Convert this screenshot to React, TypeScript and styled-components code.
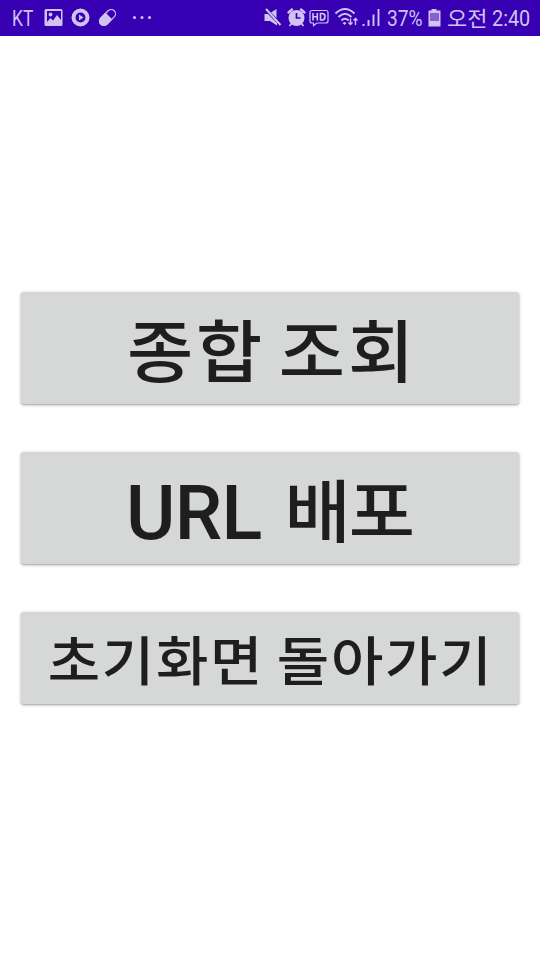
import React from 'react';
import styled, { createGlobalStyle } from 'styled-components';

const Global = createGlobalStyle`
  *, *::before, *::after { box-sizing: border-box; }
  body { margin: 0; background: #fff; }
`;

const Page = styled.div`
  width: 100%;
  height: 960px;
  display: flex;
  flex-direction: column;
  overflow: hidden;
`;

const StatusBar = styled.header`
  height: 36px;
  flex: none;
  display: flex;
  align-items: center;
  justify-content: space-between;
  padding: 0 9px 0 12px;
  background: #3700b3;
  color: #d1c2f1;
  font: 400 22px/37px Roboto, "Noto Sans CJK KR", sans-serif;
  white-space: nowrap;
`;

const Group = styled.div`
  display: flex;
  align-items: center;
  height: 36px;
`;

const Slot = styled.span<{ $w: number }>`
  width: ${p => p.$w}px;
  height: 36px;
  flex: none;
  display: block;
`;

const Condensed = styled.span<{ $scale: number }>`
  display: block;
  transform: scaleX(${p => p.$scale});
  transform-origin: left center;
`;

const Meridiem = styled.span`
  display: block;
  font-size: 22px;
  line-height: 38px;
  transform: scaleY(0.95);
`;

const Icon = styled.svg`
  display: block;
  flex: none;
`;

const Menu = styled.main`
  display: flex;
  flex-direction: column;
  gap: 48px;
  padding: 256px 21px 0;
`;

const Button = styled.button<{ $small?: boolean }>`
  height: ${p => (p.$small ? 92 : 112)}px;
  display: flex;
  align-items: center;
  justify-content: center;
  padding: 0 0 ${p => (p.$small ? 2 : 0)}px ${p => (p.$small ? 1 : 4)}px;
  border: 0;
  border-radius: 3px;
  background: #d6d8d7;
  box-shadow: 0 1px 2px rgba(0, 0, 0, 0.28), 0 1px 4px rgba(0, 0, 0, 0.16);
  color: #1e1e1e;
  font: 500 ${p => (p.$small ? 57 : 72)}px/1 "Noto Sans CJK KR", sans-serif;
  letter-spacing: ${p => (p.$small ? 1.7 : 2.9)}px;
  word-spacing: ${p => (p.$small ? -2 : -5.5)}px;
  white-space: pre;
`;

const Label = styled.span`
  display: flex;
  align-items: baseline;
  padding-top: 7px;
  margin-left: -5px;
  letter-spacing: -2px;
`;

const Hangul = styled.span<{ $gap?: number }>`
  display: block;
  margin-left: ${p => p.$gap ?? 0}px;
  transform: scaleY(0.94);
`;

const Latin = styled.span`
  font: 500 75.5px/1 Roboto, sans-serif;
  letter-spacing: -0.8px;
`;

export default function App() {
  return (
    <Page>
      <Global />
      <StatusBar>
        <Group>
          <Slot $w={32}><Condensed $scale={0.79}>KT</Condensed></Slot>
          <Icon width="120" height="36" viewBox="44 0 120 36" fill="currentColor">
            <path fillRule="evenodd" d="M46 9h15q1.500 0 1.500 1.500v14q0 1.500-1.500 1.500H46q-1.500 0-1.500-1.500v-14Q44.500 9 46 9ZM47 11v11l3.500-4 2.500 2.500 4-5.500 4 5V11Z" />
            <circle cx="50.500" cy="14.500" r="1.900" />
            <path fillRule="evenodd" d="M80.500 8.500a9 9 0 1 1 0 18 9 9 0 0 1 0-18Zm0 4a5 5 0 1 0 0 10 5 5 0 0 0 0-10Z" />
            <path d="m79 14.500 4.500 3-4.500 3Z" />
            <g transform="translate(107.500 17.500) rotate(-45)">
              <rect x="-9.500" y="-4.300" width="19" height="8.600" rx="4.300" fill="none" stroke="currentColor" strokeWidth="1.200" />
              <path d="M2-4.900h-7a4.900 4.900 0 0 0 0 9.800h7Z" />
            </g>
            <circle cx="134.500" cy="17.500" r="1.500" /><circle cx="142" cy="17.500" r="1.500" /><circle cx="149.500" cy="17.500" r="1.500" />
          </Icon>
        </Group>
        <Group>
          <Icon width="123" height="36" viewBox="264 0 123 36" fill="none" stroke="currentColor">
            <path fill="currentColor" stroke="none" d="M264.500 14h3.500l9 9v2.500l-7-4.500h-5.500ZM271 12.500l5.500-3.500v9Z" />
            <path d="m266 9 14.500 16" strokeWidth="2" />
            <circle cx="296.500" cy="18" r="8" fill="currentColor" stroke="none" />
            <path d="m288.500 12.500 3.500-3M304.500 12.500l-3.500-3" strokeWidth="2.400" strokeLinecap="round" />
            <path d="m291.500 23.500-2 2.500M301.500 23.500l2 2.500" strokeWidth="1.800" />
            <path d="M296.500 13v5h4" stroke="#3700b3" strokeWidth="1.700" />
            <path d="M312 10.500h14q2 0 2 2v8.500q0 2-2 2h-9l-3.500 2.500v-2.500H312q-2 0-2-2v-8.500q0-2 2-2Z" strokeWidth="1.200" />
            <path d="M313 13v7.500M317.300 13v7.500M313 16.700h4.300M320.500 13.500v6.500h1.500q3-.2 3-3.300t-3-3.200Z" strokeWidth="1.600" />
            <path d="M335.500 13.500q9.500-9 19 0M338.500 17q6.500-6.500 13 0M341.500 20.500q3.500-3.500 7 0" strokeWidth="2" />
            <path fill="currentColor" stroke="none" d="m342.500 23 2-1 2 1-2 2Z" />
            <path d="M350.500 18.500v6M348.500 22.500l2 2 2-2M355.500 25v-6.500M353.500 20.500l2-2 2 2" strokeWidth="1.400" />
            <path d="M363.500 24v2M368.500 20v6M373.500 14.500v11.500M378.500 9v17" strokeWidth="1.900" />
          </Icon>
          <Slot $w={41}><Condensed $scale={0.87}>37%</Condensed></Slot>
          <Icon width="19" height="36" viewBox="428 0 19 36" fill="currentColor">
            <path d="M431.500 9h5v1.500h4v16h-12v-16h3Z" />
            <path fill="#3700b3" fillOpacity=".5" d="M430 13h9v8h-9Z" />
          </Icon>
          <Slot $w={45}><Meridiem>오전</Meridiem></Slot>
          <Slot $w={39}><Condensed $scale={0.9}>2:40</Condensed></Slot>
        </Group>
      </StatusBar>
      <Menu>
        <Button><Hangul>종합 조회</Hangul></Button>
        <Button><Label><Latin>URL</Latin><Hangul $gap={23}>배포</Hangul></Label></Button>
        <Button $small><Hangul>초기화면 돌아가기</Hangul></Button>
      </Menu>
    </Page>
  );
}
